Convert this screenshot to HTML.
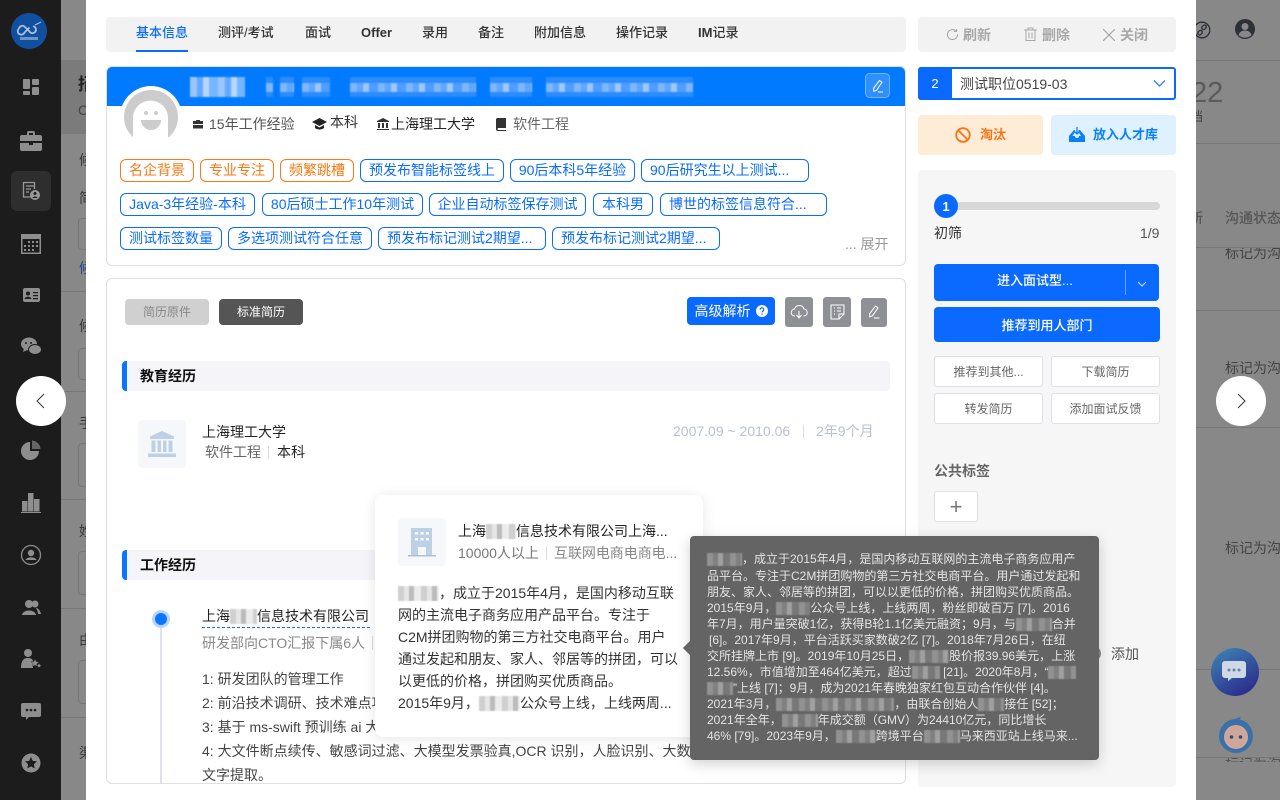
<!DOCTYPE html>
<html lang="zh"><head><meta charset="utf-8"><title>简历详情</title>
<style>
*{box-sizing:border-box}
html,body{margin:0;padding:0;width:1280px;height:800px;overflow:hidden;background:#888;font-family:"Liberation Sans","Noto Sans CJK SC",sans-serif;font-size:14px;color:#333}
.a,.t,.b{position:absolute}
.t{white-space:nowrap;line-height:20px}
.b{display:flex;align-items:center;justify-content:center;white-space:nowrap}
.tab{top:23px;font-size:13px;font-weight:500;color:#333}
.tag{height:23px;border:1px solid #0a6cff;color:#0a6cff;border-radius:6px;background:#fff;font-size:14px;line-height:21px;text-align:center;white-space:nowrap;overflow:hidden}
.o{border-color:#f57a14;color:#f57a14}
.sm{background:#fff;border:1px solid #dfe0e6;border-radius:3px;font-size:12px;color:#666;height:31px;width:109px}
.m{display:inline-block;height:15px;vertical-align:-3px;filter:blur(.5px);background:repeating-linear-gradient(90deg,#cfcfcf 0 6px,#e6e6e6 6px 11px,#bcbcbc 11px 16px,#ececec 16px 23px)}
.h{position:absolute;height:20px;top:77px;background:#2b8cff;filter:blur(.7px)}
.h:after{content:"";position:absolute;left:0;right:0;top:6px;height:9px;background:repeating-linear-gradient(90deg,#7fb7ff 0 7px,#5fa6ff 7px 13px,#9cc8ff 13px 19px,#4f9dff 19px 28px)}
.h.n{background:repeating-linear-gradient(90deg,#9ac6ff 0 7px,#63a9ff 7px 13px,#b6d6ff 13px 19px,#78b5ff 19px 28px)}
.h.n:after{display:none}
.tip{position:absolute;left:707px;font-size:12px;line-height:16px;color:#e4e4e4;white-space:nowrap}
.tip .m{height:13px;background:repeating-linear-gradient(90deg,#929292 0 6px,#808080 6px 11px,#a0a0a0 11px 16px,#787878 16px 23px)}
.side{position:absolute;left:20px;width:22px;height:22px;fill:#8e8e8e}
.ln{position:absolute;height:1px;background:#777}
</style></head><body>

<!-- backdrop -->
<div class="a" style="left:61px;top:60px;width:25px;height:74px;background:#7b7b7b"></div>
<div class="a" style="left:61px;top:0;width:25px;height:800px;overflow:hidden;color:#3a3a3a">
 <div class="t" style="left:17px;top:75px;font-size:17px;font-weight:700;color:#222">招</div>
 <div class="t" style="left:17px;top:100px;color:#444">C</div>
 <div class="t" style="left:18px;top:150px">候</div>
 <div class="t" style="left:18px;top:188px">简</div>
 <div class="a" style="left:17px;top:218px;width:30px;height:32px;border:1px solid #777;border-radius:4px"></div>
 <div class="t" style="left:18px;top:258px;color:#26488f">候</div>
 <div class="t" style="left:18px;top:316px">候</div>
 <div class="a" style="left:17px;top:348px;width:30px;height:32px;border:1px solid #777;border-radius:4px"></div>
 <div class="t" style="left:18px;top:413px">手</div>
 <div class="a" style="left:17px;top:443px;width:30px;height:44px;border:1px solid #777;border-radius:4px"></div>
 <div class="t" style="left:18px;top:521px">姓</div>
 <div class="a" style="left:17px;top:551px;width:30px;height:44px;border:1px solid #777;border-radius:4px"></div>
 <div class="t" style="left:18px;top:630px">由</div>
 <div class="a" style="left:17px;top:660px;width:30px;height:44px;border:1px solid #777;border-radius:4px"></div>
 <div class="t" style="left:18px;top:743px">渠</div>
</div>
<div class="ln" style="left:61px;top:291px;width:25px"></div>
<div class="ln" style="left:61px;top:391px;width:25px"></div>
<div class="ln" style="left:61px;top:499px;width:25px"></div>
<div class="ln" style="left:61px;top:608px;width:25px"></div>
<div class="ln" style="left:61px;top:717px;width:25px"></div>

<div class="a" style="left:1196px;top:0;width:84px;height:800px;overflow:hidden;color:#444">
 <div class="ln" style="left:0;top:60px;width:84px"></div>
 <div class="ln" style="left:0;top:143px;width:84px"></div>
 <div class="ln" style="left:0;top:247px;width:84px"></div>
 <div class="ln" style="left:0;top:310px;width:84px"></div>
 <div class="ln" style="left:0;top:427px;width:84px"></div>
 <div class="ln" style="left:0;top:669px;width:84px"></div>
 <div class="ln" style="left:0;top:757px;width:84px"></div>
 <div class="t" style="left:-5px;top:78px;font-size:29px;line-height:30px;color:#5a5a5a">22</div>
 <div class="t" style="left:-6px;top:107px;font-size:13px;color:#444">档</div>
 <div class="t" style="left:-7px;top:208px;font-size:14px;font-weight:500;color:#555">所</div>
 <div class="t" style="left:29px;top:208px;font-size:14px;font-weight:500;color:#555">沟通状态</div>
 <div class="a" style="left:0;top:248px;width:84px;height:20px;overflow:hidden"><div class="t" style="left:29px;top:-5px;font-size:14px">标记为沟通</div></div>
 <div class="t" style="left:29px;top:358px;font-size:14px">标记为沟通</div>
 <div class="t" style="left:29px;top:538px;font-size:14px">标记为沟通</div>
 <div class="a" style="left:0;top:758px;width:84px;height:4px;overflow:hidden"><div class="t" style="left:29px;top:-4px;font-size:14px;color:#555">标记为沟通</div></div>
 <svg class="a" style="left:-3px;top:21px" width="18" height="18" viewBox="0 0 18 18" fill="none" stroke="#2c2f38" stroke-width="1.300"><circle cx="9" cy="9" r="7.800"/><rect x="8.500" y="4.500" width="5" height="3.600" rx="1.800" transform="rotate(-45 11 6.300)"/><rect x="4.500" y="9.900" width="5" height="3.600" rx="1.800" transform="rotate(-45 7 11.700)"/></svg>
 <svg class="a" style="left:39px;top:19px" width="20" height="20" viewBox="0 0 20 20"><circle cx="10" cy="10" r="10" fill="#2c3038"/><circle cx="10" cy="7.500" r="3.500" fill="#888"/><path d="M3.500 16c1-3.500 4-4.500 6.500-4.500s5.500 1 6.500 4.500a9 9 0 01-13 0z" fill="#888"/></svg>
 <svg class="a" style="left:15px;top:648px" width="48" height="48" viewBox="0 0 48 48"><defs><linearGradient id="g1" x1="0" y1="0" x2=".6" y2="1"><stop offset="0" stop-color="#3f88b5"/><stop offset="1" stop-color="#2b2f8e"/></linearGradient></defs><circle cx="24" cy="24" r="24" fill="url(#g1)"/><path d="M14 13h18a3 3 0 013 3v11a3 3 0 01-3 3H21l-4 3v-3h-3a3 3 0 01-3-3V16a3 3 0 013-3z" fill="#cfd8e4"/><circle cx="18" cy="22" r="1.500" fill="#5f86ad"/><circle cx="23" cy="22" r="1.500" fill="#5f86ad"/><circle cx="28" cy="22" r="1.500" fill="#5f86ad"/></svg>
 <svg class="a" style="left:22px;top:715px" width="36" height="38" viewBox="0 0 36 38"><circle cx="18" cy="21" r="17" fill="#3a70a8"/><circle cx="18" cy="22" r="12" fill="#cfa79a"/><circle cx="13.500" cy="22" r="1.800" fill="#324a78"/><circle cx="22.500" cy="22" r="1.800" fill="#324a78"/><path d="M15 5c3-2 7-2 8-4-1 4-3 6-5 7z" fill="#3a70a8"/></svg>
</div>

<!-- sidebar -->
<div class="a" style="left:0;top:0;width:61px;height:800px;background:#1c1c1c"></div>
<svg class="a" style="left:11px;top:13px" width="36" height="36" viewBox="0 0 36 36"><circle cx="18" cy="18" r="18" fill="#11509f"/><path d="M8 15.500a3.500 3.500 0 015.500-2l5 5a3.500 3.500 0 105-4.700l-1.300-.8M18.500 14.500l-5 5a3.500 3.500 0 11-5.500-4" fill="none" stroke="#a8bfdc" stroke-width="1.800"/><path d="M24 12l6-3" stroke="#a8bfdc" stroke-width="1"/><rect x="9" y="24" width="18" height="3" fill="#6f93c2"/></svg>
<svg class="side" style="top:76px" viewBox="0 0 22 22"><rect x="3" y="3" width="7" height="10" rx="1"/><rect x="12" y="3" width="7" height="6" rx="1"/><rect x="3" y="15" width="7" height="4" rx="1"/><rect x="12" y="11" width="7" height="8" rx="1"/></svg>
<svg class="side" style="top:129px;left:19px;width:24px;height:24px" viewBox="0 0 24 24"><path d="M8 6V4a2 2 0 012-2h4a2 2 0 012 2v2h5a2 2 0 012 2v4H1V8a2 2 0 012-2zm2 0h4V4h-4zM1 14h9v2h4v-2h9v6a2 2 0 01-2 2H3a2 2 0 01-2-2z"/></svg>
<div class="a" style="left:11px;top:171px;width:40px;height:40px;background:#2e2e2e;border-radius:6px"></div>
<svg class="a" style="left:21px;top:181px" width="20" height="20" viewBox="0 0 20 20" fill="none" stroke="#999" stroke-width="1.300"><path d="M10 16H2.500V1.500h11V8"/><path d="M5 5h8M5 8h5M5 11h3"/><circle cx="14" cy="14" r="5" fill="#999" stroke="none"/><circle cx="14" cy="12.500" r="1.500" fill="#1c1c1c" stroke="none"/><path d="M11.500 17c.5-2 4.500-2 5 0" fill="#1c1c1c" stroke="none"/></svg>
<svg class="side" style="top:233px" viewBox="0 0 22 22"><path d="M1 1h20v20H1zm1.500 5v13.500h17V6z"/><path d="M8 8h2v2H8zm4 0h2v2h-2zm4 0h2v2h-2zM4 12h2v2H4zm4 0h2v2H8zm4 0h2v2h-2zm4 0h2v2h-2zM4 16h2v2H4zm4 0h2v2H8zm4 0h2v2h-2z"/></svg>
<svg class="side" style="top:284px" viewBox="0 0 22 22"><rect x="3" y="4" width="17" height="14" rx="2"/><circle cx="8" cy="9.500" r="2" fill="#1c1c1c"/><path d="M4.500 15c.5-3 6.500-3 7 0zM13 8h5v1.300h-5zm0 3h5v1.300h-5zm0 3h5v1.300h-5z" fill="#1c1c1c"/></svg>
<svg class="side" style="top:336px" viewBox="0 0 22 22"><ellipse cx="9" cy="8" rx="8" ry="6.500"/><path d="M4 12l-1 4 4-2z"/><ellipse cx="15" cy="13.500" rx="6.500" ry="5" stroke="#1c1c1c"/><circle cx="6" cy="7" r="1" fill="#1c1c1c"/><circle cx="11" cy="7" r="1" fill="#1c1c1c"/></svg>
<svg class="side" style="top:439px" viewBox="0 0 22 22"><path d="M10 3v9h9a9 9 0 11-9-9z"/><path d="M12 1.500a9 9 0 018.500 8.500H12z" opacity=".65"/></svg>
<svg class="side" style="top:492px" viewBox="0 0 22 22"><path d="M1 20h20v1H1zM2 9h5.500v10.500H2zM8 1h5.500v18.500H8zM14 7h5.500v12.500H14z"/></svg>
<svg class="side" style="top:544px" viewBox="0 0 22 22"><circle cx="11" cy="11" r="9.500" fill="none" stroke="#8e8e8e" stroke-width="1.300"/><circle cx="11" cy="9" r="3.200"/><path d="M5.500 16c1-3.500 10-3.500 11 0z"/></svg>
<svg class="side" style="top:596px" viewBox="0 0 22 22"><circle cx="9" cy="8" r="4"/><circle cx="15" cy="8" r="3.500"/><path d="M2 19c1-6 13-6 14 0zM16 12c2 0 4 2 5 6l-3 0c0-2-1-4-2-6z"/></svg>
<svg class="side" style="top:648px" viewBox="0 0 22 22"><circle cx="8" cy="5" r="4"/><path d="M1 20c0-9 4-10 7-10s5 1 5 4v6z"/><path d="M15 11l1.200 2.500 2.800.3-2 2 .5 2.700-2.500-1.300-2.500 1.300.5-2.700-2-2 2.800-.3zM19 15l.8 1.600 1.700.2-1.200 1.200.3 1.700-1.600-.8-1.600.8.300-1.700-1.200-1.200 1.700-.2z" stroke="#1c1c1c" stroke-width=".4"/></svg>
<svg class="side" style="top:700px" viewBox="0 0 22 22"><path d="M3 3h16a2 2 0 012 2v10a2 2 0 01-2 2H9l-3 3v-3H3a2 2 0 01-2-2V5a2 2 0 012-2z"/><circle cx="7" cy="10" r="1.300" fill="#1c1c1c"/><circle cx="11" cy="10" r="1.300" fill="#1c1c1c"/><circle cx="15" cy="10" r="1.300" fill="#1c1c1c"/></svg>
<svg class="side" style="top:752px" viewBox="0 0 22 22"><circle cx="11" cy="11" r="9.500"/><path d="M11 5l1.800 3.900 4.200.5-3.100 2.900.8 4.200L11 14.400l-3.700 2.100.8-4.200L5 9.400l4.200-.5z" fill="#1c1c1c"/></svg>

<!-- modal -->
<div class="a" style="left:86px;top:0;width:1110px;height:800px;background:#fff"></div>

<!-- tabs -->
<div class="a" style="left:106px;top:17px;width:800px;height:35px;background:#f2f2f2;border-radius:4px"></div>
<div class="t tab" style="left:136px;color:#0a6cff">基本信息</div>
<div class="a" style="left:136px;top:50px;width:52px;height:2px;background:#0a6cff"></div>
<div class="t tab" style="left:218px">测评/考试</div>
<div class="t tab" style="left:305px">面试</div>
<div class="t tab" style="left:361px;font-weight:700">Offer</div>
<div class="t tab" style="left:422px">录用</div>
<div class="t tab" style="left:478px">备注</div>
<div class="t tab" style="left:534px">附加信息</div>
<div class="t tab" style="left:616px">操作记录</div>
<div class="t tab" style="left:698px"><b>IM</b>记录</div>

<!-- profile card -->
<div class="a" style="left:106px;top:66px;width:800px;height:200px;background:#fff;border:1px solid #e0e0e0;border-radius:6px;overflow:hidden">
 <div class="a" style="left:0;top:0;width:798px;height:39px;background:#007bff"></div>
</div>
<div class="h n" style="left:190px;width:55px"></div>
<div class="h" style="left:266px;width:7px"></div>
<div class="h" style="left:280px;width:14px"></div>
<div class="h" style="left:302px;width:28px"></div>
<div class="h" style="left:350px;width:126px"></div>
<div class="h" style="left:490px;width:42px"></div>
<div class="h" style="left:546px;width:147px"></div>
<svg class="a" style="left:865px;top:73px" width="25" height="25" viewBox="0 0 25 25" fill="none"><rect x=".5" y=".5" width="24" height="24" rx="4" fill="#2f8fff" stroke="#77b4ff"/><path d="M14.500 7.500l2.500 1.800-5.500 8-2.800 1-.1-3z" stroke="#fff"/><path d="M13 19h5" stroke="#fff"/></svg>
<svg class="a" style="left:120px;top:86px" width="62" height="60" viewBox="0 0 62 60"><circle cx="31" cy="31" r="31" fill="#fff"/><circle cx="31" cy="31" r="27" fill="#ccc"/><path d="M13 60V32a17.500 17.500 0 0135 0v28z" fill="#fff"/><rect x="0" y="51" width="62" height="11" fill="#fff"/><circle cx="26" cy="27" r="2" fill="#ccc"/><circle cx="36" cy="27" r="2" fill="#ccc"/><path d="M21 34h20a10 10 0 01-20 0z" fill="#ccc"/></svg>
<svg class="a" style="left:193px;top:119px" width="10" height="10" viewBox="0 0 10 10"><path d="M3 2V1h4v1h3v3H0V2zM0 6h10v3.500H0z" fill="#333"/></svg>
<div class="t" style="left:209px;top:114px;color:#555;font-size:14px">15年工作经验</div>
<svg class="a" style="left:312px;top:117px" width="15" height="13" viewBox="0 0 15 13"><path d="M7.500 1L15 5l-7.500 4L0 5zM3 8v3c2 2 7 2 9 0V8L7.500 10.500z" fill="#222"/></svg>
<div class="t" style="left:330px;top:112px;color:#333;font-size:14px">本科</div>
<svg class="a" style="left:377px;top:118px" width="12" height="12" viewBox="0 0 12 12"><path d="M6 0l6 3v1H0V3zM1 5h2v5H1zm4 0h2v5H5zm4 0h2v5H9zM0 11h12v1H0z" fill="#333"/></svg>
<div class="t" style="left:391px;top:114px;color:#222;font-size:14px">上海理工大学</div>
<svg class="a" style="left:496px;top:118px" width="11" height="13" viewBox="0 0 11 13"><path d="M1 0h9v10H2.500a1 1 0 000 2H10v1H2a2 2 0 01-2-2V2a2 2 0 011-2z" fill="#333"/></svg>
<div class="t" style="left:513px;top:114px;color:#666;font-size:14px">软件工程</div>

<!-- tags -->
<div class="a tag o" style="left:120px;top:159px;width:74px">名企背景</div>
<div class="a tag o" style="left:200px;top:159px;width:74px">专业专注</div>
<div class="a tag o" style="left:280px;top:159px;width:74px">频繁跳槽</div>
<div class="a tag" style="left:360px;top:159px;width:144px">预发布智能标签线上</div>
<div class="a tag" style="left:510px;top:159px;width:125px">90后本科5年经验</div>
<div class="a tag" style="left:641px;top:159px;width:168px;text-align:left;padding-left:8px">90后研究生以上测试...</div>
<div class="a tag" style="left:120px;top:193px;width:135px">Java-3年经验-本科</div>
<div class="a tag" style="left:262px;top:193px;width:161px">80后硕士工作10年测试</div>
<div class="a tag" style="left:429px;top:193px;width:157px">企业自动标签保存测试</div>
<div class="a tag" style="left:593px;top:193px;width:60px">本科男</div>
<div class="a tag" style="left:660px;top:193px;width:167px;text-align:left;padding-left:8px">博世的标签信息符合...</div>
<div class="a tag" style="left:120px;top:227px;width:102px">测试标签数量</div>
<div class="a tag" style="left:228px;top:227px;width:144px">多选项测试符合任意</div>
<div class="a tag" style="left:378px;top:227px;width:168px;text-align:left;padding-left:8px">预发布标记测试2期望...</div>
<div class="a tag" style="left:552px;top:227px;width:168px;text-align:left;padding-left:8px">预发布标记测试2期望...</div>
<div class="t" style="left:845px;top:234px;color:#999;font-size:14px">... 展开</div>

<!-- resume card -->
<div class="a" style="left:106px;top:278px;width:800px;height:506px;border:1px solid #e0e0e0;border-radius:6px;background:#fff"></div>
<div class="b" style="left:125px;top:299px;width:84px;height:26px;background:#d0d0d0;border-radius:4px;color:#888;font-size:12px;padding-bottom:2px">简历原件</div>
<div class="b" style="left:219px;top:299px;width:84px;height:26px;background:#555;border-radius:4px;color:#fff;font-size:12px;padding-bottom:2px">标准简历</div>
<div class="b" style="left:687px;top:297px;width:88px;height:28px;background:#0a69ff;border-radius:4px;color:#fff;font-size:14px">高级解析<svg style="margin-left:5px" width="12" height="12" viewBox="0 0 12 12"><circle cx="6" cy="6" r="6" fill="#fff"/><path d="M4.200 4.700a1.800 1.800 0 113 1.200c-.7.500-1.200.8-1.200 1.500M6 8.500v1.200" fill="none" stroke="#0a69ff" stroke-width="1.200"/></svg></div>
<svg class="a" style="left:785px;top:297px" width="28" height="30" viewBox="0 0 28 30" fill="none" stroke="#fff" stroke-width="1"><rect width="28" height="30" rx="3" fill="#8e9096" stroke="none"/><path d="M10 19a3.500 3.500 0 01-.5-7 5 5 0 019.500 0 3.500 3.500 0 01-.5 7M14 14v7M11.500 18l2.500 3 2.500-3"/></svg>
<svg class="a" style="left:823px;top:297px" width="28" height="30" viewBox="0 0 28 30" fill="none" stroke="#fff" stroke-width="1"><rect width="28" height="30" rx="3" fill="#8e9096" stroke="none"/><path d="M8 8h13v9l-5 5H8zM16 22v-5h5M11 11h1M14 11h4M11 14h1M14 14h4M11 17h1"/></svg>
<svg class="a" style="left:861px;top:298px" width="26" height="29" viewBox="0 0 26 29" fill="none" stroke="#fff" stroke-width="1"><rect width="26" height="29" rx="3" fill="#8e9096" stroke="none"/><path d="M14.500 8l2.500 1.800-5.500 8-2.800 1-.1-3zM13 20h5.500"/></svg>

<div class="a" style="left:122px;top:361px;width:768px;height:30px;background:#f4f4f9;border-radius:4px;overflow:hidden"><div style="width:5px;height:30px;background:#0a76ff"></div></div>
<div class="t" style="left:140px;top:366px;font-size:14px;font-weight:700;color:#111">教育经历</div>
<div class="a" style="left:138px;top:420px;width:48px;height:48px;background:#f5f7fa;border-radius:4px"></div>
<svg class="a" style="left:148px;top:431px" width="28" height="26" viewBox="0 0 28 26"><path d="M14 0l12 5.500V8H2V5.500z" fill="#bcd0e6"/><path d="M3.500 9.500h4v11.500h-4zm6 0h3.500v11.500H9.500zm5.500 0h3.500v11.500H15zm5.500 0h4v11.500h-4zM0 22.500h28V26H0z" fill="#bcd0e6"/></svg>
<div class="t" style="left:202px;top:422px;color:#222;font-size:14px">上海理工大学</div>
<div class="t" style="left:205px;top:442px;color:#666;font-size:14px">软件工程</div>
<div class="a" style="left:268px;top:446px;width:1px;height:13px;background:#ddd"></div>
<div class="t" style="left:277px;top:442px;color:#222;font-size:14px">本科</div>
<div class="t" style="left:673px;top:421px;color:#b9c1d0;font-size:14px">2007.09 ~ 2010.06</div>
<div class="a" style="left:803px;top:425px;width:1px;height:13px;background:#ddd"></div>
<div class="t" style="left:816px;top:421px;color:#b9c1d0;font-size:14px">2年9个月</div>

<div class="a" style="left:122px;top:550px;width:768px;height:30px;background:#f4f4f9;border-radius:4px;overflow:hidden"><div style="width:5px;height:30px;background:#0a76ff"></div></div>
<div class="t" style="left:140px;top:555px;font-size:14px;font-weight:700;color:#111">工作经历</div>
<div class="a" style="left:160px;top:626px;width:2px;height:157px;background:#dfe1f3"></div>
<div class="a" style="left:152px;top:610px;width:18px;height:18px;background:#b8d6ff;border-radius:50%"></div>
<div class="a" style="left:155px;top:613px;width:12px;height:12px;background:#0a76ff;border-radius:50%"></div>
<div class="t" style="left:202px;top:606px;color:#222">上海<i class="m" style="width:27px"></i>信息技术有限公司</div>
<div class="a" style="left:202px;top:627px;width:168px;border-top:1px dashed #0a6cff"></div>
<div class="t" style="left:202px;top:633px;color:#888;font-size:14px">研发部向CTO汇报下属6人</div>
<div class="a" style="left:372px;top:636px;width:1px;height:14px;background:#ddd"></div>
<div class="t" style="left:202px;top:669px;color:#444">1: 研发团队的管理工作</div>
<div class="t" style="left:202px;top:693px;color:#444">2: 前沿技术调研、技术难点攻</div>
<div class="t" style="left:202px;top:717px;color:#444">3: 基于 ms-swift 预训练 ai 大</div>
<div class="t" style="left:202px;top:741px;color:#444;width:495px;overflow:hidden">4: 大文件断点续传、敏感词过滤、大模型发票验真,OCR 识别，人脸识别、大数据</div>
<div class="t" style="left:202px;top:765px;color:#444">文字提取。</div>

<!-- right column -->
<div class="a" style="left:918px;top:17px;width:258px;height:35px;background:#f2f2f2;border-radius:4px"></div>
<svg class="a" style="left:946px;top:28px" width="13" height="13" viewBox="0 0 13 13" fill="none" stroke="#a8a8a8" stroke-width="1.100"><path d="M11.500 6.500a5 5 0 11-1.500-3.500"/><path d="M10.500 1v2.500H8" /></svg>
<div class="t" style="left:963px;top:25px;font-size:14px;font-weight:700;color:#a8a8a8">刷新</div>
<svg class="a" style="left:1024px;top:27px" width="13" height="14" viewBox="0 0 13 14" fill="none" stroke="#a8a8a8"><path d="M0 3h13M4 3V1h5v2M2 3v10.500h9V3M5 5.500v6M8 5.500v6"/></svg>
<div class="t" style="left:1042px;top:25px;font-size:14px;font-weight:700;color:#a8a8a8">删除</div>
<svg class="a" style="left:1103px;top:29px" width="12" height="12" viewBox="0 0 12 12" stroke="#a8a8a8" stroke-width="1.200"><path d="M0 0l12 12M12 0L0 12"/></svg>
<div class="t" style="left:1120px;top:25px;font-size:14px;font-weight:700;color:#a8a8a8">关闭</div>

<div class="a" style="left:918px;top:67px;width:258px;height:33px;border:2px solid #0a69ff;border-radius:3px;background:#fff"></div>
<div class="b" style="left:918px;top:67px;width:34px;height:33px;background:#0a69ff;color:#fff;font-size:13px;border-radius:3px 0 0 3px">2</div>
<div class="t" style="left:960px;top:74px;color:#444;font-size:14px">测试职位0519-03</div>
<svg class="a" style="left:1153px;top:79px" width="13" height="9" viewBox="0 0 13 9" fill="none" stroke="#2a7fff" stroke-width="1.300"><path d="M1 1.500l5.500 5.500L12 1.500"/></svg>

<div class="a" style="left:918px;top:115px;width:125px;height:40px;background:#ffecd6;border-radius:4px"></div>
<svg class="a" style="left:955px;top:127px" width="16" height="16" viewBox="0 0 16 16" fill="none" stroke="#f97316" stroke-width="1.800"><circle cx="8" cy="8" r="6.800"/><path d="M3.500 3.500l9 9"/></svg>
<div class="t" style="left:980px;top:125px;font-size:13px;font-weight:700;color:#f97316">淘汰</div>
<div class="a" style="left:1051px;top:115px;width:125px;height:40px;background:#dff0ff;border-radius:4px"></div>
<svg class="a" style="left:1069px;top:127px" width="16" height="15" viewBox="0 0 16 15"><path d="M5 3l-5 6v6h16V9l-5-6h-1.500v2l2.500 4H10a2 2 0 01-4 0H3.500L6 5V3z" fill="#0a80ff"/><path d="M8 0v7M5.500 4.500L8 7l2.500-2.500" stroke="#0a80ff" fill="none" stroke-width="1.300"/></svg>
<div class="t" style="left:1093px;top:125px;font-size:13px;font-weight:700;color:#0a80ff">放入人才库</div>

<div class="a" style="left:918px;top:170px;width:258px;height:617px;background:#f6f6f6;border-radius:4px"></div>
<div class="a" style="left:946px;top:202px;width:214px;height:8px;background:#d8d8d8;border-radius:4px"></div>
<div class="b" style="left:934px;top:194px;width:24px;height:24px;background:#0a69ff;color:#fff;border-radius:50%;font-size:13px;font-weight:700">1</div>
<div class="t" style="left:934px;top:223px;font-size:14px;color:#333">初筛</div>
<div class="t" style="left:1140px;top:223px;font-size:14px;color:#555">1/9</div>
<div class="a" style="left:934px;top:264px;width:225px;height:37px;background:#0a69ff;border-radius:4px"></div>
<div class="t" style="left:997px;top:271px;color:#fff;font-size:13px;font-weight:500">进入面试型...</div>
<div class="a" style="left:1125px;top:270px;width:1px;height:25px;background:#6fa6ff"></div>
<svg class="a" style="left:1137px;top:281px" width="10" height="6" viewBox="0 0 10 6" fill="none" stroke="#cfe0ff"><path d="M1 1l4 4 4-4"/></svg>
<div class="b" style="left:934px;top:307px;width:226px;height:35px;background:#0a69ff;border-radius:4px;color:#fff;font-size:13px;font-weight:500">推荐到用人部门</div>
<div class="a b sm" style="left:934px;top:356px">推荐到其他...</div>
<div class="a b sm" style="left:1051px;top:356px">下载简历</div>
<div class="a b sm" style="left:934px;top:393px">转发简历</div>
<div class="a b sm" style="left:1051px;top:393px">添加面试反馈</div>
<div class="t" style="left:934px;top:461px;font-size:14px;font-weight:700;color:#666">公共标签</div>
<div class="a b sm" style="left:934px;top:491px;width:44px;font-size:22px;color:#777;font-weight:400">+</div>
<div class="a" style="left:1086px;top:646px;width:15px;height:15px;background:#8a8a8a;border-radius:50%"></div>
<div class="t" style="left:1111px;top:644px;color:#555;font-size:14px">添加</div>

<!-- popover -->
<div class="a" style="left:375px;top:495px;width:328px;height:242px;background:#fff;border-radius:8px;box-shadow:0 2px 14px rgba(0,0,0,.1)"></div>
<div class="a" style="left:398px;top:518px;width:48px;height:48px;background:#f5f7fa;border-radius:4px"></div>
<svg class="a" style="left:408px;top:528px" width="28" height="30" viewBox="0 0 28 30"><path d="M3 0h21v27H18v-8h-8v8H3z" fill="#bcd0e6"/><path d="M7 4h3v2.500H7zm5.500 0h3v2.500h-3zM18 4h3v2.500h-3zM7 10h3v2.500H7zm5.500 0h3v2.500h-3zM18 10h3v2.500h-3z" fill="#fff"/><path d="M0 27h28v1.500H0z" fill="#a9c2dc"/></svg>
<div class="t" style="left:458px;top:521px;color:#222;font-size:14px">上海<i class="m" style="width:30px"></i>信息技术有限公司上海...</div>
<div class="t" style="left:458px;top:543px;color:#777;font-size:14px">10000人以上</div>
<div class="a" style="left:546px;top:546px;width:1px;height:14px;background:#ddd"></div>
<div class="t" style="left:554px;top:543px;color:#888;font-size:14px;letter-spacing:-.05px">互联网电商电商电...</div>
<div class="t" style="left:398px;top:583px;color:#333"><i class="m" style="width:41px"></i>，成立于2015年4月，是国内移动互联</div>
<div class="t" style="left:398px;top:605px;color:#333">网的主流电子商务应用产品平台。专注于</div>
<div class="t" style="left:398px;top:627px;color:#333">C2M拼团购物的第三方社交电商平台。用户</div>
<div class="t" style="left:398px;top:649px;color:#333">通过发起和朋友、家人、邻居等的拼团，可以</div>
<div class="t" style="left:398px;top:671px;color:#333">以更低的价格，拼团购买优质商品。</div>
<div class="t" style="left:398px;top:693px;color:#333">2015年9月，<i class="m" style="width:41px"></i>公众号上线，上线两周...</div>

<!-- tooltip -->
<div class="a" style="left:690px;top:536px;width:409px;height:224px;background:#646464;border-radius:4px;box-shadow:0 4px 14px rgba(0,0,0,.18)"></div>
<div class="a" style="left:685px;top:643px;width:10px;height:10px;background:#646464;transform:rotate(45deg)"></div>
<div class="tip" style="top:551px"><i class="m" style="width:35px"></i>，成立于2015年4月，是国内移动互联网的主流电子商务应用产</div>
<div class="tip" style="top:568px">品平台。专注于C2M拼团购物的第三方社交电商平台。用户通过发起和</div>
<div class="tip" style="top:584px">朋友、家人、邻居等的拼团，可以以更低的价格，拼团购买优质商品。</div>
<div class="tip" style="top:600px">2015年9月，<i class="m" style="width:34px"></i>公众号上线，上线两周，粉丝即破百万 [7]。2016</div>
<div class="tip" style="top:616px">年7月，用户量突破1亿，获得B轮1.1亿美元融资；9月，与<i class="m" style="width:36px"></i>合并</div>
<div class="tip" style="top:632px;left:709px">[6]。2017年9月，平台活跃买家数破2亿 [7]。2018年7月26日，在纽</div>
<div class="tip" style="top:648px">交所挂牌上市 [9]。2019年10月25日，<i class="m" style="width:40px"></i>股价报39.96美元，上涨</div>
<div class="tip" style="top:664px">12.56%，市值增加至464亿美元，超过<i class="m" style="width:28px"></i> [21]。2020年8月，“<i class="m" style="width:28px"></i></div>
<div class="tip" style="top:680px"><i class="m" style="width:26px"></i>”上线 [7]；9月，成为2021年春晚独家红包互动合作伙伴 [4]。</div>
<div class="tip" style="top:696px">2021年3月，<i class="m" style="width:118px"></i>，由联合创始人<i class="m" style="width:26px"></i>接任 [52]；</div>
<div class="tip" style="top:712px">2021年全年，<i class="m" style="width:36px"></i>年成交额（GMV）为24410亿元，同比增长</div>
<div class="tip" style="top:728px">46% [79]。2023年9月，<i class="m" style="width:40px"></i>跨境平台<i class="m" style="width:36px"></i>马来西亚站上线马来...</div>

<!-- nav arrows -->
<div class="a" style="left:16px;top:376px;width:50px;height:50px;background:#fff;border-radius:50%"></div>
<svg class="a" style="left:36px;top:393px" width="9" height="16" viewBox="0 0 9 16" fill="none" stroke="#333"><path d="M8 1L1 8l7 7"/></svg>
<div class="a" style="left:1216px;top:376px;width:50px;height:50px;background:#fff;border-radius:50%"></div>
<svg class="a" style="left:1237px;top:393px" width="9" height="16" viewBox="0 0 9 16" fill="none" stroke="#333"><path d="M1 1l7 7-7 7"/></svg>
</body></html>
